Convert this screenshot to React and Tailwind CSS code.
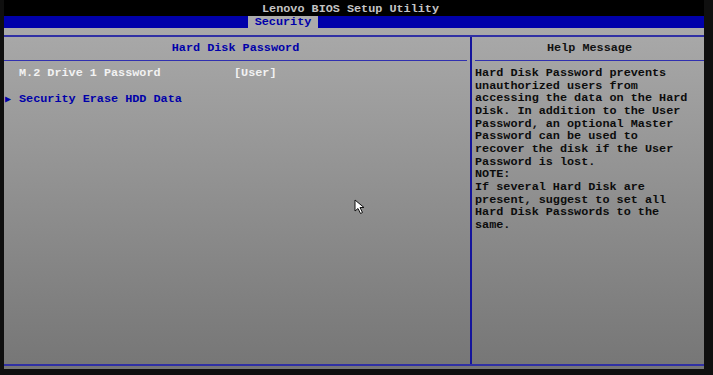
import React from 'react';

const mono = { fontFamily: '"Liberation Mono", "DejaVu Sans Mono", monospace' };

const helpLines = [
  'Hard Disk Password prevents',
  'unauthorized users from',
  'accessing the data on the Hard',
  'Disk. In addition to the User',
  'Password, an optional Master',
  'Password can be used to',
  'recover the disk if the User',
  'Password is lost.',
  'NOTE:',
  'If several Hard Disk are',
  'present, suggest to set all',
  'Hard Disk Passwords to the',
  'same.',
];

const Cursor = () => (
  <svg className="absolute left-[350px] top-[199px]" width="12" height="16" viewBox="0 0 12 16">
    <path d="M1 1 L1 12 L4 9.5 L6.5 14.5 L8.5 13.5 L6 8.5 L10 8.5 Z" fill="#fff" stroke="#111" strokeWidth="1" strokeLinejoin="round" />
  </svg>
);

export default function App() {
  return (
    <div className="w-[713px] h-[375px] bg-[#0f0f0f] pl-[4px] pr-[9px] pb-[6px] font-bold text-[11.8px]" style={mono}>
      <div className="relative w-[700px] h-[369px] flex flex-col">
        {/* title */}
        <div className="h-[16px] bg-black text-[#c4c4c4] text-center leading-[18px] pr-[7px]">
          Lenovo BIOS Setup Utility
        </div>
        {/* menu bar */}
        <div className="h-[12px] bg-[#0000aa] flex pl-[244px]">
          <div className="w-[70px] bg-[#ababab] text-[#0000aa] text-center leading-[12px]">Security</div>
        </div>

        {/* body */}
        <div className="flex-1 flex flex-col bg-gradient-to-b from-[#a9a9a9] to-[#767676] pt-[7px] pb-[3px]">
          <div className="flex-1 flex border-t-2 border-b-2 border-[#3030a4]">
            {/* left panel */}
            <div className="w-[466px] flex flex-col">
              <div className="h-[24px] mr-[3px] flex items-center justify-center text-[#0000aa] border-b border-[#3030b0]">
                Hard Disk Password
              </div>
              <div className="pt-[6px] leading-[13px]">
                <div className="flex h-[13px] text-[#f2f2f2]">
                  <span className="w-[230px] pl-[15px]">M.2 Drive 1 Password</span>
                  <span>[User]</span>
                </div>
                <div className="flex h-[13px] mt-[13px] text-[#0000aa]">
                  <span className="w-[15px] pl-[1px] text-[10px]">▶</span>
                  <span>Security Erase HDD Data</span>
                </div>
              </div>
            </div>
            {/* divider */}
            <div className="w-[2px] bg-[#14149c]" />
            {/* right panel */}
            <div className="flex-1 flex flex-col">
              <div className="h-[24px] ml-[3px] flex items-center justify-center text-[#111] border-b border-[#3030b0]">
                Help Message
              </div>
              <div className="pt-[6px] pl-[3px] leading-[12.67px] text-[#0c0c0c]">
                {helpLines.map((l) => (
                  <div key={l} className="whitespace-pre">{l}</div>
                ))}
              </div>
            </div>
          </div>
        </div>
        <Cursor />
      </div>
    </div>
  );
}
